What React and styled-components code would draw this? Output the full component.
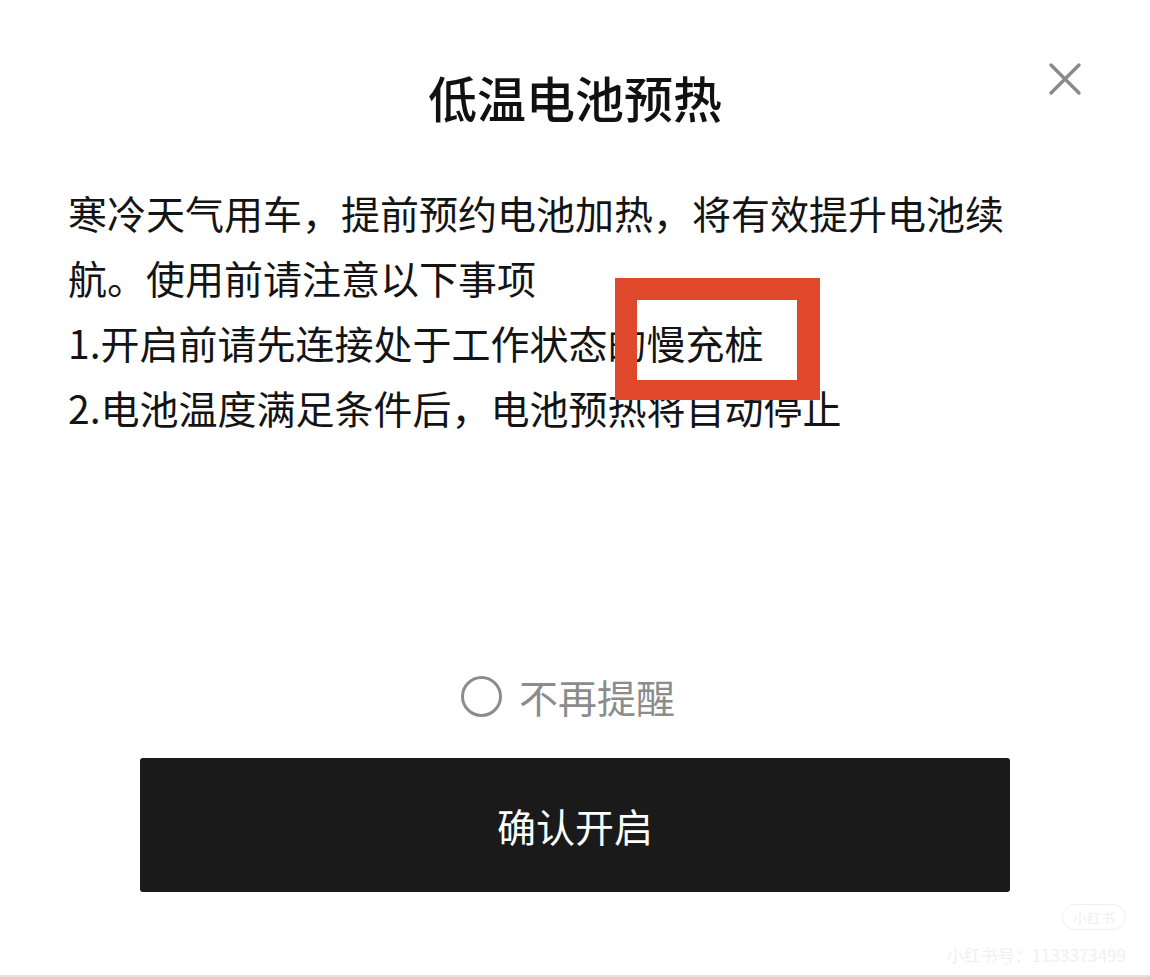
import styled, { createGlobalStyle } from "styled-components";

const GlobalStyle = createGlobalStyle`
    html, body {
        margin: 0;
        padding: 0;
        background: #fff;
    }
    * {
        box-sizing: border-box;
    }
`;

function CloseIcon() {
    return (
        <svg width="34" height="34" viewBox="0 0 34 34">
            <path d="M3 3 L31 31 M31 3 L3 31" stroke="#8a8a8a" strokeWidth="3.4" strokeLinecap="round" />
        </svg>
    );
}

function App() {
    return (
        <>
            <GlobalStyle />
            <Styled.Sheet>
                <Styled.Header>
                    <span />
                    <Styled.Title>低温电池预热</Styled.Title>
                    <Styled.Close aria-label="关闭">
                        <CloseIcon />
                    </Styled.Close>
                </Styled.Header>

                <Styled.Body>
                    <p>寒冷天气用车，提前预约电池加热，将有效提升电池续航。使用前请注意以下事项</p>
                    <p>1.开启前请先连接处于工作状态的慢充桩</p>
                    <p>2.电池温度满足条件后，电池预热将自动停止</p>
                    <Styled.Highlight />
                </Styled.Body>

                <Styled.Spacer />

                <Styled.Remind>
                    <Styled.Radio />
                    <span>不再提醒</span>
                </Styled.Remind>

                <Styled.Confirm>确认开启</Styled.Confirm>

                <Styled.Footer>
                    <Styled.Watermark>
                        <Styled.Badge>小红书</Styled.Badge>
                        <span>小红书号：1133373499</span>
                    </Styled.Watermark>
                </Styled.Footer>
            </Styled.Sheet>
        </>
    );
}

export default App;

const Styled = {
    Sheet: styled.div`
        position: relative;
        width: 1150px;
        height: 977px;
        display: flex;
        flex-direction: column;
        font-family: "Noto Sans CJK SC", "Noto Sans", sans-serif;
        color: #141414;
        overflow: hidden;
    `,
    Header: styled.header`
        display: grid;
        grid-template-columns: 1fr auto 1fr;
        align-items: start;
        padding: 62px 68px 0;
    `,
    Title: styled.h1`
        margin: 0;
        font-size: 49px;
        line-height: 70px;
        font-weight: 500;
        color: #111;
    `,
    Close: styled.button`
        justify-self: end;
        width: 34px;
        height: 34px;
        padding: 0;
        border: none;
        background: none;
        display: flex;
        cursor: pointer;
    `,
    Body: styled.div`
        position: relative;
        margin: 48px 0 0 68px;
        width: 960px;
        font-size: 39px;
        line-height: 65px;
        color: #141414;

        p {
            margin: 0;
        }
    `,
    Highlight: styled.div`
        position: absolute;
        left: 547px;
        top: 98px;
        width: 205px;
        height: 122px;
        border: 22px solid #e0492c;
        border-right-width: 23px;
        border-bottom-width: 20px;
    `,
    Spacer: styled.div`
        flex: 1;
    `,
    Remind: styled.label`
        display: flex;
        align-items: center;
        justify-content: center;
        gap: 17px;
        height: 48px;
        margin-right: 14px;
        font-size: 39px;
        color: #8c8c8c;
    `,
    Radio: styled.span`
        width: 41px;
        height: 41px;
        border-radius: 50%;
        border: 3px solid #8c8c8c;
    `,
    Confirm: styled.button`
        align-self: center;
        width: 870px;
        height: 134px;
        margin-top: 38px;
        border: none;
        border-radius: 3px;
        background: #1a1a1a;
        color: #fff;
        font-family: inherit;
        font-size: 39px;
        cursor: pointer;
    `,
    Footer: styled.footer`
        position: relative;
        height: 85px;
        border-bottom: 2px solid #e2e2e2;
    `,
    Watermark: styled.div`
        position: absolute;
        right: 24px;
        top: 12px;
        display: flex;
        flex-direction: column;
        align-items: flex-end;
        gap: 12px;
        font-size: 17px;
        color: #f0f0f0;
    `,
    Badge: styled.span`
        padding: 0 10px;
        border-radius: 14px;
        border: 1px solid #f0f0f0;
        font-size: 14px;
        line-height: 24px;
    `,
};
